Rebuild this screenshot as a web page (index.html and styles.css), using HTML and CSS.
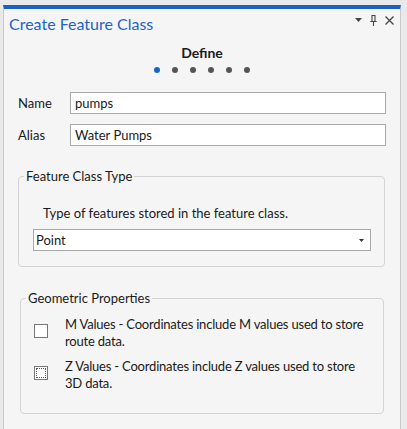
FILE: index.html
```html
<!DOCTYPE html>
<html>
<head>
<meta charset="utf-8">
<link rel="stylesheet" href="styles.css">
</head>
<body>
<div class="panel">
  <div class="header">
    <div class="title">Create Feature Class</div>
    <div class="tools">
      <svg class="tool" width="7" height="4" viewBox="0 0 7 4"><path d="M0 0 H7 L3.5 4 Z" fill="#444"/></svg>
      <svg class="tool" width="7" height="11" viewBox="0 0 7 11"><path d="M1.5 0.5 H5.5 M2 0.5 V6.5 M5 0.5 V6.5 M0.3 6.5 H6.7 M3.5 6.5 V11" stroke="#444" stroke-width="1.1" fill="none"/></svg>
      <svg class="tool" width="9" height="9" viewBox="0 0 9 9"><path d="M0.5 0.5 L8.5 8.5 M8.5 0.5 L0.5 8.5" stroke="#444" stroke-width="1.3" fill="none"/></svg>
    </div>
  </div>
  <div class="step">
    <div class="step-name">Define</div>
    <div class="dots">
      <span class="dot active"></span><span class="dot"></span><span class="dot"></span><span class="dot"></span><span class="dot"></span><span class="dot"></span>
    </div>
  </div>
  <div class="fields">
    <div class="field"><label>Name</label><div class="input">pumps</div></div>
    <div class="field"><label>Alias</label><div class="input">Water Pumps</div></div>
  </div>
  <fieldset class="group type-group">
    <legend>Feature Class Type</legend>
    <div class="desc">Type of features stored in the feature class.</div>
    <div class="select"><span>Point</span><svg width="5" height="3" viewBox="0 0 5 3"><path d="M0 0 H5 L2.5 3 Z" fill="#333"/></svg></div>
  </fieldset>
  <fieldset class="group geo-group">
    <legend>Geometric Properties</legend>
    <div class="check-row"><span class="box"></span><div class="check-text">M Values - Coordinates include M values used to store route data.</div></div>
    <div class="check-row"><span class="box focus"></span><div class="check-text">Z Values - Coordinates include Z values used to store 3D data.</div></div>
  </fieldset>
</div>
</body>
</html>
```

FILE: styles.css
```css
html, body {
  margin: 0;
  padding: 0;
  background: #e9e9e9;
  height: 100%;
  overflow: hidden;
}
body {
  font-family: "Lato", "Noto Sans", sans-serif;
  color: #1a1a1a;
  padding-top: 5px;
  box-sizing: border-box;
}
.panel {
  margin-left: 3px;
  width: 396px;
  height: 424px;
  background: #f5f5f5;
  border-top: 4px solid #1a5fc4;
  border-left: 1px solid #c9c9c9;
  border-right: 1px solid #c9c9c9;
  box-sizing: content-box;
}
.header {
  display: flex;
  justify-content: space-between;
  align-items: center;
  padding: 0 6px 0 5px;
  height: 28px;
}
.title {
  color: #1d63c6;
  font-size: 16px;
}
.tools {
  display: flex;
  align-items: center;
  gap: 8px;
  margin-top: -6px;
}
.step {
  display: flex;
  flex-direction: column;
  align-items: center;
  margin-top: 7px;
}
.step-name {
  font-size: 14px;
  font-weight: 700;
  line-height: 18px;
}
.dots {
  display: flex;
  gap: 12px;
  margin-top: 5px;
}
.dot {
  width: 6px;
  height: 6px;
  border-radius: 50%;
  background: #555;
}
.dot.active { background: #1766c6; }
.fields {
  margin-top: 19px;
  padding: 0 14px 0 14px;
  display: flex;
  flex-direction: column;
  gap: 10px;
}
.field {
  display: flex;
  align-items: center;
  font-size: 13px;
}
.field label {
  width: 52px;
}
.input {
  flex: 1;
  height: 22px;
  border: 1px solid #a9a9a9;
  background: #fff;
  box-sizing: border-box;
  line-height: 20px;
  padding-left: 4px;
  font-size: 13px;
}
.group {
  margin: 0 15px 0 14px;
  border: 1px solid #d4d4d4;
  border-radius: 4px;
  padding: 0;
  font-size: 13px;
}
.group legend {
  padding: 0 2px;
  margin-left: 5px;
  font-size: 13px;
  line-height: 18px;
}
.type-group {
  margin-top: 21px;
  height: 100px;
  box-sizing: border-box;
}
.desc {
  margin: 19px 0 0 24px;
  line-height: 18px;
}
.select {
  margin: 7px 13px 0 14px;
  height: 22px;
  border: 1px solid #a9a9a9;
  background: #fff;
  box-sizing: border-box;
  display: flex;
  align-items: center;
  justify-content: space-between;
  padding: 0 6px 0 2px;
}
.geo-group {
  margin-top: 22px;
  margin-left: 16px;
  margin-right: 16px;
  height: 125px;
  box-sizing: border-box;
}
.check-row {
  display: flex;
  align-items: center;
  margin-top: 9px;
}
.check-row + .check-row { margin-top: 8px; }
.box {
  width: 14px;
  height: 14px;
  border: 1px solid #777;
  background: #fff;
  box-sizing: border-box;
  margin: -4px 17px 0 13px;
  flex: none;
  position: relative;
}
.box.focus::after {
  content: "";
  position: absolute;
  inset: 1px;
  border: 1px dotted #555;
}
.check-text {
  line-height: 17px;
  width: 306px;
  letter-spacing: -0.2px;
}
```
